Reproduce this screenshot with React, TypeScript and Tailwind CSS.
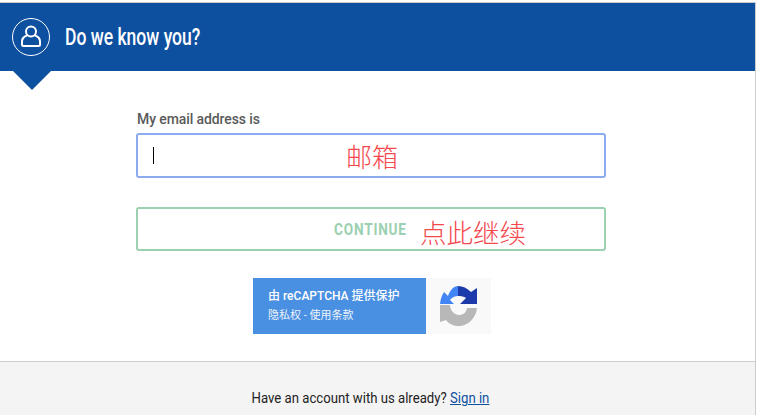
export default function App() {
  return (
    <div className="w-[758px] h-[415px] overflow-hidden bg-white pt-[2px] font-['Roboto','Noto_Sans_CJK_SC',sans-serif]">
      <div className="w-[756px] h-[413px] flex flex-col border-r border-t border-[#cccccc]">
        <header className="relative h-[68px] shrink-0 bg-[#0d509f] flex items-center pl-[12px] gap-[15px]">
          <div className="w-[38px] h-[38px] rounded-full border border-white flex items-center justify-center">
            <svg width="24" height="24" viewBox="0 0 24 24" fill="none" stroke="#fff" strokeWidth="2">
              <circle cx="12" cy="6.5" r="5" />
              <path d="M8 10.5 C5 11.5 3 13.5 3 16.5 V19.5 A1.5 1.5 0 0 0 4.5 21 H19.5 A1.5 1.5 0 0 0 21 19.5 V16.5 C21 13.5 19 11.5 16 10.5" />
            </svg>
          </div>
          <h1 className="text-white text-[24px] leading-none font-medium origin-left scale-x-[0.73] whitespace-nowrap">Do we know you?</h1>
          <div className="absolute left-[13px] top-[68px] w-0 h-0 border-l-[19px] border-r-[19px] border-t-[19px] border-l-transparent border-r-transparent border-t-[#0d509f]" />
        </header>
        <main className="flex-1 flex flex-col items-start pl-[136px] pt-[40px]">
          <label className="ml-px text-[14px] leading-[16px] font-medium text-[#5a5a5a] tracking-[-0.1px]">My email address is</label>
          <div className="relative mt-[6px] w-[470px] h-[45px] rounded-[3px] border-2 border-[#8cabee] bg-white flex items-center pl-[15px]">
            <div className="w-px h-[17px] bg-black" />
            <span className="absolute left-[208px] top-[5px] text-[26px] leading-[32px] font-light text-[#f4484d] font-['Noto_Sans_CJK_SC',sans-serif]">邮箱</span>
          </div>
          <button className="relative mt-[29px] w-[470px] h-[44px] rounded-[3px] border-2 border-[#9bd0b1] bg-white flex items-center justify-center pt-[1px] pr-[2px]">
            <span className="text-[17px] font-bold text-[#9bd0b1] tracking-[1px] origin-center scale-x-[0.8]">CONTINUE</span>
            <span className="absolute left-[282px] top-[7px] text-[26.5px] leading-[32px] font-light text-[#f4484d] font-['Noto_Sans_CJK_SC',sans-serif]">点此继续</span>
          </button>
          <div className="mt-[27px] ml-[117px] flex h-[56px] w-[238px]">
            <div className="w-[173px] bg-[#4a90e2] pl-[15px] pt-[10px] text-white leading-[17px]">
              <div className="text-[12px] font-medium whitespace-nowrap">由 reCAPTCHA 提供保护</div>
              <div className="text-[11px] opacity-90 whitespace-nowrap mt-[2px]">隐私权 - 使用条款</div>
            </div>
            <div className="w-[65px] bg-[#f9f9f9] flex items-center justify-center">
              <svg width="37" height="40" viewBox="0 0 37 40">
                <path d="M0 19 H10 C10 25 15 29 19 29 C23 29 26 27 27 22 H37 C36 32 28 40 19 40 C14 40 9 38 6 34 L0 36 Z" fill="#b8b8b8" />
                <path d="M0 18 C0.5 13 2 9 4 6 L8 10 C10 4 14 0 18 0 V10 C15 10 12 11.5 10 14 L14 18 Z" fill="#4285f4" />
                <path d="M18 0 C23 0 27 2 31 6 L37 2 V18 H20 L26 12 C24 10.500 21 10 18 10 Z" fill="#1c3aa9" />
              </svg>
            </div>
          </div>
        </main>
        <footer className="h-[54px] shrink-0 bg-[#f4f4f4] border-t border-[#cccccc] flex items-start justify-center pt-[27px] pr-[14px] text-[14px] leading-[18px] text-[#222]">
          <span className="origin-center scale-x-[0.94] whitespace-nowrap">Have an account with us already? <a className="text-[#0d509f] underline">Sign in</a></span>
        </footer>
      </div>
    </div>
  );
}
